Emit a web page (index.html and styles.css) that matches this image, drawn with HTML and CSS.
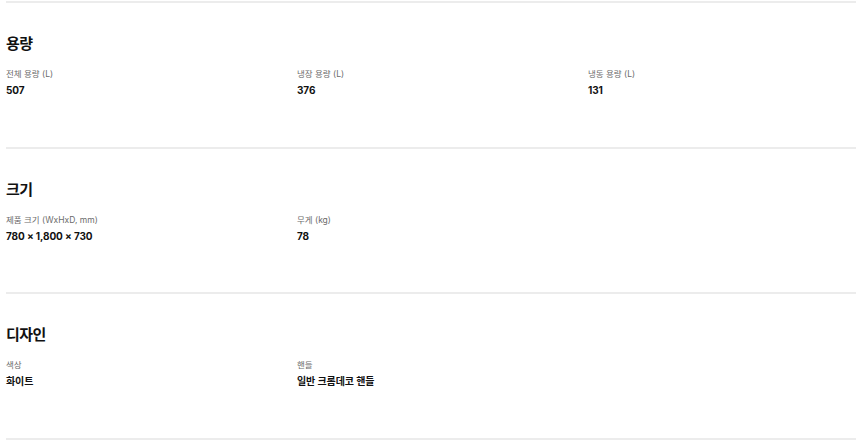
FILE: index.html
```html
<!DOCTYPE html>
<html lang="ko">
<head>
<meta charset="utf-8">
<link rel="stylesheet" href="styles.css">
</head>
<body>
<div class="specs">
  <section class="spec">
    <h2 class="spec-title">용량</h2>
    <div class="spec-grid">
      <div class="item"><div class="label">전체 용량 (L)</div><div class="value">507</div></div>
      <div class="item"><div class="label">냉장 용량 (L)</div><div class="value">376</div></div>
      <div class="item"><div class="label">냉동 용량 (L)</div><div class="value">131</div></div>
    </div>
  </section>
  <section class="spec">
    <h2 class="spec-title">크기</h2>
    <div class="spec-grid">
      <div class="item"><div class="label">제품 크기 (WxHxD, mm)</div><div class="value">780 × 1,800 × 730</div></div>
      <div class="item"><div class="label">무게 (kg)</div><div class="value">78</div></div>
    </div>
  </section>
  <section class="spec">
    <h2 class="spec-title">디자인</h2>
    <div class="spec-grid">
      <div class="item"><div class="label">색상</div><div class="value">화이트</div></div>
      <div class="item"><div class="label">핸들</div><div class="value">일반 크롬데코 핸들</div></div>
    </div>
  </section>
  <div class="spec-end"></div>
</div>
</body>
</html>
```
FILE: styles.css
```css
html, body {
  margin: 0;
  padding: 0;
  background: #fff;
}
body {
  font-family: "Inter", "Noto Sans CJK KR", sans-serif;
  color: #111;
}
.specs {
  padding: 1px 4px 0 6px;
}
.spec {
  border-top: 2px solid #ececec;
  height: 143.5px;
  box-sizing: content-box;
}
.spec-title {
  margin: 0;
  padding-top: 29px;
  font-family: "Noto Sans CJK KR", sans-serif;
  font-size: 15px;
  line-height: 22px;
  font-weight: 700;
  letter-spacing: -0.5px;
}
.spec-grid {
  display: grid;
  grid-template-columns: repeat(3, 268px);
  column-gap: 23px;
  margin-top: 14px;
}
.label {
  font-size: 8.5px;
  line-height: 12px;
  color: #6b6b6b;
}
.value {
  margin-top: 3px;
  font-size: 10px;
  line-height: 14px;
  font-weight: 700;
  letter-spacing: -0.1px;
  color: #111;
}
.spec-end {
  border-top: 2px solid #ececec;
}
```
